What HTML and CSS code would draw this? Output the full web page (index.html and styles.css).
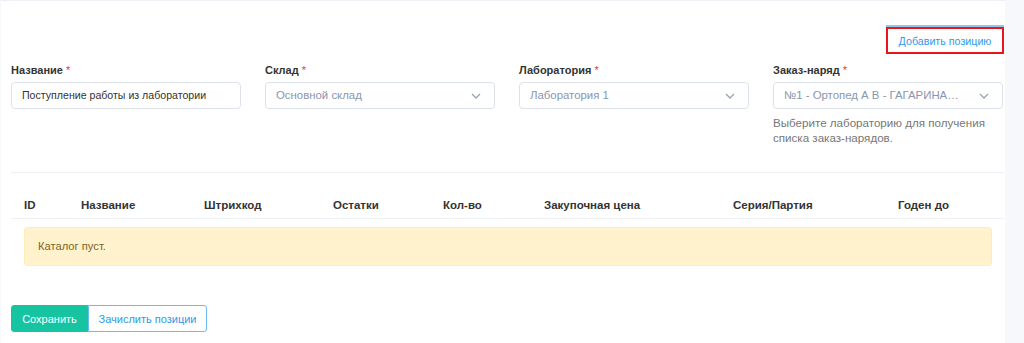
FILE: index.html
```html
<!DOCTYPE html>
<html lang="ru">
<head>
  <meta charset="UTF-8" />
  <title>Поступление работы из лаборатории</title>
  <link rel="stylesheet" href="styles.css">
</head>
<body>
  <div class="card">
    <div class="toolbar">
      <button class="btn-add">Добавить позицию</button>
    </div>

    <div class="fields">
      <div class="field">
        <label>Название <span class="req">*</span></label>
        <div class="control">Поступление работы из лаборатории</div>
      </div>
      <div class="field">
        <label>Склад <span class="req">*</span></label>
        <div class="control select">
          <span>Основной склад</span>
          <svg class="chevron" width="10" height="6" viewBox="0 0 10 6"><path d="M1 1l4 4 4-4" fill="none" stroke="#9aa3ae" stroke-width="1.3"/></svg>
        </div>
      </div>
      <div class="field">
        <label>Лаборатория <span class="req">*</span></label>
        <div class="control select">
          <span>Лаборатория 1</span>
          <svg class="chevron" width="10" height="6" viewBox="0 0 10 6"><path d="M1 1l4 4 4-4" fill="none" stroke="#9aa3ae" stroke-width="1.3"/></svg>
        </div>
      </div>
      <div class="field">
        <label>Заказ-наряд <span class="req">*</span></label>
        <div class="control select">
          <span class="long">№1 - Ортопед А В - ГАГАРИНА ДАРЬЯ</span>
          <svg class="chevron" width="10" height="6" viewBox="0 0 10 6"><path d="M1 1l4 4 4-4" fill="none" stroke="#9aa3ae" stroke-width="1.3"/></svg>
        </div>
        <p class="help">Выберите лабораторию для получения списка заказ-нарядов.</p>
      </div>
    </div>

    <div class="table">
      <div class="thead">
        <div>ID</div>
        <div>Название</div>
        <div>Штрихкод</div>
        <div>Остатки</div>
        <div>Кол-во</div>
        <div>Закупочная цена</div>
        <div>Серия/Партия</div>
        <div>Годен до</div>
      </div>
      <div class="alert">Каталог пуст.</div>
    </div>

    <div class="actions">
      <button class="btn-save">Сохранить</button>
      <button class="btn-enroll">Зачислить позиции</button>
    </div>
  </div>
</body>
</html>
```

FILE: styles.css
```css
body {
  font-family: 'Liberation Sans', Arial, sans-serif;
  background-color: #f6f8fb;
  margin: 0;
  padding: 0;
  color: #333;
}
.card {
  background: white;
  width: 1004px;
  height: 343px;
  margin-left: 1px;
  border-top: 1px solid #eceff3;
  box-sizing: border-box;
  padding: 0 0 0 10px;
}
.toolbar {
  display: flex;
  justify-content: flex-end;
  padding-top: 26px;
  padding-right: 1px;
}
.btn-add {
  width: 118px;
  height: 27px;
  background: white;
  color: #2b9bea;
  border: 2px solid #e8161b;
  box-shadow: 0 -2px 0 #8fc6f0;
  border-radius: 0;
  font-family: inherit;
  font-size: 10.7px;
  padding: 0;
}
.fields {
  display: grid;
  grid-template-columns: repeat(4, 230px);
  column-gap: 24px;
  margin-top: 9px;
}
.field label {
  display: block;
  font-size: 11px;
  font-weight: bold;
  color: #333;
  height: 14px;
  line-height: 14px;
  margin-bottom: 5px;
}
.req {
  color: #e0393e;
  font-weight: normal;
}
.control {
  height: 27px;
  border: 1px solid #dde2ea;
  border-radius: 4px;
  box-sizing: border-box;
  padding: 0 10px;
  font-size: 10.6px;
  line-height: 25px;
  color: #333;
  white-space: nowrap;
}
.select {
  display: flex;
  align-items: center;
  gap: 8px;
  color: #8996ad;
  font-size: 11.4px;
}
.select span {
  flex: 1;
  overflow: hidden;
  text-overflow: ellipsis;
}
.select .long {
  margin-right: 12px;
}
.chevron {
  margin-right: 3px;
}
.help {
  font-size: 11.6px;
  color: #777;
  line-height: 15px;
  margin: 6px 0 0 0;
  padding-right: 10px;
}
.table {
  width: 993px;
  margin-top: 27px;
  border-top: 1px solid #eef0f3;
}
.thead {
  display: grid;
  grid-template-columns: 57px 123px 129px 110px 101px 189px 165px 1fr;
  height: 46px;
  box-sizing: border-box;
  padding-top: 24px;
  line-height: 16px;
  border-bottom: 1px solid #eef0f3;
  font-size: 11.5px;
  font-weight: bold;
  color: #333;
}
.thead div {
  padding-left: 13px;
}
.alert {
  margin: 8px 12px 0 13px;
  height: 39px;
  line-height: 37px;
  padding-left: 13px;
  background: #fff2cc;
  border: 1px solid #ffedb8;
  border-radius: 3px;
  box-sizing: border-box;
  color: #7d6427;
  font-size: 11.2px;
}
.actions {
  display: flex;
  margin-top: 39px;
}
.actions button {
  height: 27px;
  font-family: inherit;
  font-size: 11px;
  padding: 0;
  cursor: pointer;
}
.btn-save {
  width: 77px;
  background: #16c4a2;
  border: 1px solid #16c4a2;
  color: white;
  border-radius: 3px 0 0 3px;
}
.btn-enroll {
  width: 119px;
  background: white;
  border: 1px solid #6cbaf3;
  color: #2b9bea;
  border-radius: 0 3px 3px 0;
  font-size: 10.6px;
}
```
